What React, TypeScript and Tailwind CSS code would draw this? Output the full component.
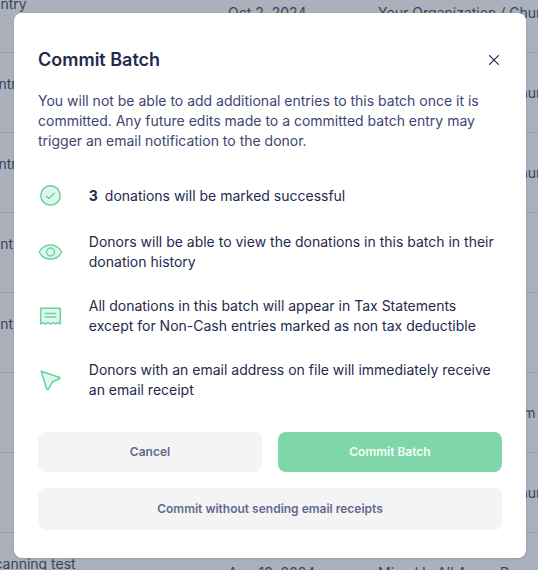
import type { ReactNode } from "react";
import clsx from "clsx";

interface EntryRow {
  name: string;
  nameClass?: string;
  date?: string;
  fund: string;
}

const rows: EntryRow[] = [
  { name: "Entry", date: "Oct 2, 2024", fund: "Your Organization / Church" },
  { name: "Entry", nameClass: "-ml-0.5", fund: "Your Organization / Church" },
  { name: "Entry", nameClass: "-ml-0.5", fund: "Your Organization / Church" },
  { name: "ent", fund: "" },
  { name: "ent", fund: "" },
  { name: "", fund: "Youth Summer Program" },
  { name: "", fund: "Your Organization / Church" },
  { name: "scanning test", nameClass: "-ml-[5px]", date: "Aug 19, 2024", fund: "Mixed Is All Areas Donor" },
];

function EntriesTable() {
  return (
    <div className="absolute right-0 -left-2 -top-[27px] text-[14px] leading-5 text-[#3b445a]">
      {rows.map((row, i) => (
        <div
          key={i}
          className="grid h-20 grid-cols-[236px_150px_180px] items-center border-b border-[#979fac] whitespace-nowrap"
        >
          <span className={clsx("-mt-[18px]", row.nameClass)}>{row.name}</span>
          <span>{row.date}</span>
          <span>{row.fund}</span>
        </div>
      ))}
    </div>
  );
}

function CheckIcon() {
  return (
    <svg width="24" height="24" viewBox="0 0 24 24" fill="#e0f8ec" stroke="#69d2a2" strokeWidth="1.5" strokeLinecap="round" strokeLinejoin="round">
      <circle cx="12.5" cy="11.5" r="9.7" />
      <path d="m8.3 12.2 2.6 2.3 5.4-5.2" fill="none" />
    </svg>
  );
}

function EyeIcon() {
  return (
    <svg width="24" height="24" viewBox="0 0 24 24" fill="#e0f8ec" stroke="#69d2a2" strokeWidth="1.5" strokeLinejoin="round" className="overflow-visible">
      <path d="M1.2 12C3.7 7.2 7.7 4.9 12.5 4.9s8.7 2.3 11.2 7.1c-2.5 4.8-6.4 7.1-11.2 7.1S3.7 16.8 1.2 12Z" />
      <circle cx="12.5" cy="12" r="4" />
    </svg>
  );
}

function ReceiptIcon() {
  return (
    <svg width="24" height="24" viewBox="0 0 24 24" fill="#e0f8ec" stroke="#69d2a2" strokeWidth="1.5" strokeLinecap="round" strokeLinejoin="round">
      <path d="M2.7 4.2h19.6V20l-2.5-1.3-2.4 1.4-2.5-1.4-2.4 1.4-2.4-1.4-2.5 1.4-2.4-1.4L2.7 20Z" />
      <path d="M7.2 9.5h10.6M7.2 13h10.6" />
    </svg>
  );
}

function SendIcon() {
  return (
    <svg width="24" height="24" viewBox="0 0 24 24" fill="#e0f8ec" stroke="#69d2a2" strokeWidth="1.5" strokeLinejoin="round">
      <path d="M3.2 3.2 21.8 9.5v1L14.4 14l-4.3 7.6H8.9Z" />
    </svg>
  );
}

function Item({ icon, children }: { icon: ReactNode; children: ReactNode }) {
  return (
    <li className="flex items-center">
      <span className="mr-[26.8px] shrink-0">{icon}</span>
      <p className="whitespace-nowrap">{children}</p>
    </li>
  );
}

function CommitDialog() {
  return (
    <div
      role="dialog"
      className="absolute top-[13px] left-[14px] h-[545px] w-[512px] rounded-lg bg-white px-6 pt-[35px] shadow-sm"
    >
      <div className="flex items-center justify-between">
        <h2 className="text-[18px] leading-6 font-semibold text-[#242a4e]">Commit Batch</h2>
        <button aria-label="Close" className="flex size-4 items-center justify-center">
          <svg width="10" height="10" viewBox="0 0 10 10" stroke="#242a4e" strokeWidth="1.2" strokeLinecap="round">
            <path d="m.6.6 8.8 8.8M9.4.6.6 9.4" />
          </svg>
        </button>
      </div>
      <p className="mt-[19px] text-[14px] leading-5 whitespace-nowrap text-[#3d4572]">
        You will not be able to add additional entries to this batch once it is
        <br />
        committed. Any future edits made to a committed batch entry may
        <br />
        trigger an email notification to the donor.
      </p>
      <ul className="mt-[33px] flex flex-col gap-6 text-[14px] leading-5 text-[#242a4e]">
        <Item icon={<CheckIcon />}>
          <b className="mr-[7px] font-bold">3</b>donations will be marked successful
        </Item>
        <Item icon={<EyeIcon />}>
          Donors will be able to view the donations in this batch in their
          <br />
          donation history
        </Item>
        <Item icon={<ReceiptIcon />}>
          All donations in this batch will appear in Tax Statements
          <br />
          except for Non-Cash entries marked as non tax deductible
        </Item>
        <Item icon={<SendIcon />}>
          Donors with an email address on file will immediately receive
          <br />
          an email receipt
        </Item>
      </ul>
      <div className="mt-8 grid grid-cols-2 gap-4 text-[12px] font-semibold">
        <button className="h-10 rounded-lg bg-[#f4f4f4] text-[#636991]">Cancel</button>
        <button className="h-10 rounded-lg bg-[#7fd6a8] text-[#f4fdf8]">Commit Batch</button>
        <button className="col-span-2 h-[42px] rounded-lg bg-[#f4f4f4] text-[#636991]">
          Commit without sending email receipts
        </button>
      </div>
    </div>
  );
}

export default function App() {
  return (
    <div className="relative h-[570px] w-[538px] overflow-hidden bg-[#aab1bc] font-['Inter',sans-serif]">
      <EntriesTable />
      <CommitDialog />
    </div>
  );
}
